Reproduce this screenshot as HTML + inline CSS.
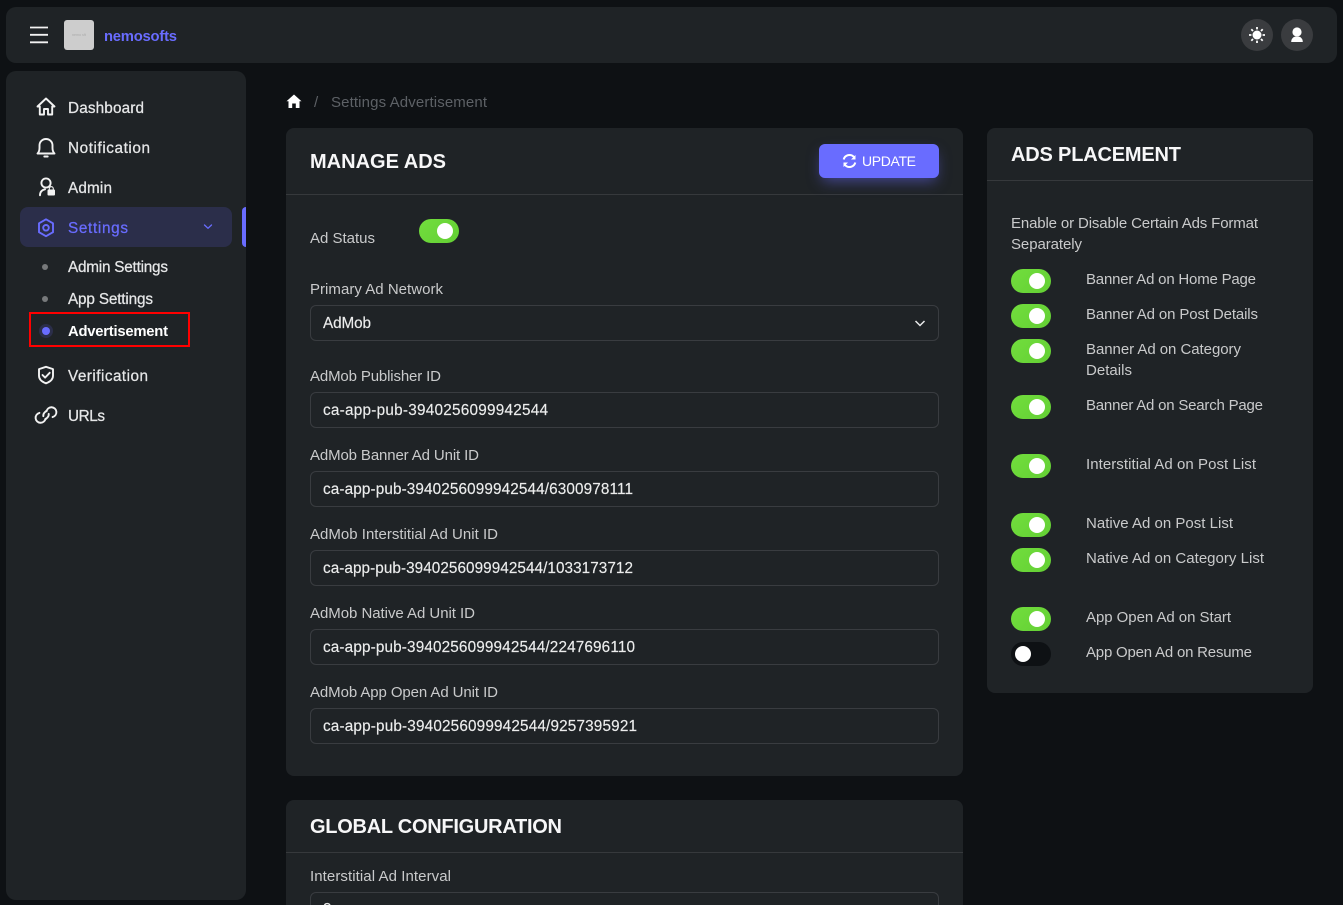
<!DOCTYPE html>
<html lang="en">
<head>
<meta charset="utf-8">
<title>Settings Advertisement</title>
<style>
*{box-sizing:border-box}
html,body{margin:0;padding:0;width:1343px;height:905px;overflow:hidden;background:#0e1114}
body{position:relative;font-family:"Liberation Sans",sans-serif}
.p{position:absolute;background:#1f2326;border-radius:10px}
.c{border-radius:8px}
.hr{position:absolute;height:1px;background:#36393c}
.inp{position:absolute;left:310px;width:629px;height:36px;border:1px solid #393c40;border-radius:6px}
.t{position:absolute;width:40px;height:24px;border-radius:12px;background:linear-gradient(135deg,#72de3d,#63cf34)}
.t:after{content:"";position:absolute;left:18px;top:4px;width:16px;height:16px;border-radius:50%;background:#fff}
.t.off{background:#0e1114}
.t.off:after{left:4px}
svg{position:absolute;overflow:visible}
svg.o{left:0;top:0;width:1343px;height:905px}
text{font-family:"Liberation Sans",sans-serif;font-size:15px;fill:#c9cacb}
.n{fill:#e6e7e8;font-size:15.3px;stroke:#e6e7e8;stroke-width:.25px}
.v{fill:#eceded;font-size:15.3px;stroke:#eceded;stroke-width:.15px}
.h{fill:#f7f7f8;font-size:20px;font-weight:700}
</style>
</head>
<body>
<div class="p" style="left:6px;top:7px;width:1331px;height:56px"></div>
<div class="p" style="left:6px;top:71px;width:240px;height:829px"></div>
<div style="position:absolute;left:20px;top:207px;width:212px;height:40px;border-radius:8px;background:#2b2e4a"></div>
<div style="position:absolute;left:242px;top:207px;width:4px;height:40px;border-radius:4px 0 0 4px;background:#696cff"></div>
<div style="position:absolute;left:64px;top:20px;width:30px;height:30px;border-radius:3px;background:#cdcdcd"></div>
<div style="position:absolute;left:29px;top:312px;width:161px;height:35px;border:2px solid #f00"></div>

<div class="p c" style="left:286px;top:128px;width:677px;height:648px"></div>
<div class="hr" style="left:286px;top:194px;width:677px"></div>
<div style="position:absolute;left:819px;top:144px;width:120px;height:34px;border-radius:6px;background:#696cff;box-shadow:0 6px 14px -3px rgba(105,108,255,.5)"></div>
<div class="p c" style="left:286px;top:800px;width:677px;height:140px"></div>
<div class="hr" style="left:286px;top:852px;width:677px"></div>
<div class="p c" style="left:987px;top:128px;width:326px;height:565px"></div>
<div class="hr" style="left:987px;top:180px;width:326px"></div>

<div class="inp" style="top:305px"></div>
<div class="inp" style="top:392px"></div>
<div class="inp" style="top:471px"></div>
<div class="inp" style="top:550px"></div>
<div class="inp" style="top:629px"></div>
<div class="inp" style="top:708px"></div>
<div class="inp" style="top:892px"></div>

<div class="t" style="left:419px;top:219px"></div>
<div class="t" style="left:1011px;top:269px"></div>
<div class="t" style="left:1011px;top:304px"></div>
<div class="t" style="left:1011px;top:339px"></div>
<div class="t" style="left:1011px;top:395px"></div>
<div class="t" style="left:1011px;top:454px"></div>
<div class="t" style="left:1011px;top:513px"></div>
<div class="t" style="left:1011px;top:548px"></div>
<div class="t" style="left:1011px;top:607px"></div>
<div class="t off" style="left:1011px;top:642px"></div>

<svg class="o" viewBox="0 0 1343 905" xmlns="http://www.w3.org/2000/svg">
  <!-- hamburger -->
  <path d="M30 27.500H48M30 34.800H48M30 42.300H48" stroke="#f2f2f2" stroke-width="1.800"/>
  <text x="72" y="36" style="font-size:3.500px;fill:#aaa" textLength="14">nemo sft</text>
  <text x="104" y="41" style="font-size:14.800px;font-weight:700;fill:#696cff" textLength="73">nemosofts</text>

  <!-- header actions -->
  <circle cx="1257" cy="35" r="16" fill="#3a3c3f"/>
  <circle cx="1297" cy="35" r="16" fill="#3a3c3f"/>
  <circle cx="1257" cy="35" r="4.500" fill="#fff"/>
  <path d="M1257 27v2.400M1257 40.600V43M1249 35h2.400M1262.600 35h2.400M1251.300 29.300l1.700 1.700M1261 39l1.700 1.700M1251.300 40.700L1253 39M1261 31l1.700-1.700" stroke="#fff" stroke-width="1.800"/>
  <circle cx="1297" cy="32" r="4.600" fill="#fff"/>
  <path d="M1291.200 42c0-2.800 1.500-4.700 3.500-5.300h4.600c2 .6 3.500 2.500 3.500 5.300z" fill="#fff"/>

  <!-- sidebar icons -->
  <g fill="none" stroke="#f2f2f2" stroke-width="1.900" stroke-linejoin="round" stroke-linecap="round">
    <path d="M37.500 106.500L46 98.500l8.500 8h-2.300v8H48v-5.500h-4v5.500h-4.200v-8z"/>
    <path d="M37.500 153.500H54.500c-1.500-1.500-2-3-2-5.500v-2.500c0-3.700-2.900-6.500-6.500-6.500s-6.500 2.800-6.500 6.500v2.500c0 2.500-.5 4-2 5.500z"/>
    <path d="M44.300 156.500h3.400"/>
    <circle cx="46" cy="183" r="4.600"/>
    <path d="M40 195.300c0-3.300 1.800-5.300 5-6"/>
    <path d="M46 219.300l7 4v8.900l-7 4-7-4v-8.900z" stroke="#696cff"/>
    <circle cx="46" cy="227.800" r="2.800" stroke="#696cff"/>
    <path d="M204.500 225l3.500 3.300 3.500-3.300" stroke="#696cff" stroke-width="1.300"/>
    <path d="M46 366.800l7 2.300v6.700c0 3.500-3 6.100-7 7.500-4-1.400-7-4-7-7.500v-6.700z"/>
    <path d="M42.500 375l2.600 2.600 4.600-4.800"/>
    <path d="M46.500 411.300a5 5 0 1 1 6.100 5.800"/>
    <path d="M45.500 418.700a5 5 0 1 1-6.100-5.800"/>
    <path d="M43.300 416.200a4.600 4.600 0 0 1 1-3.400l1.800-1.800M48.700 413.800a4.600 4.600 0 0 1-1 3.400l-1.800 1.800"/>
  </g>
  <rect x="47.500" y="189.500" width="7.500" height="6" rx="1" fill="#f2f2f2"/>
  <path d="M49.300 190v-1.300a2 2 0 0 1 4 0V190" fill="none" stroke="#f2f2f2" stroke-width="1.100"/>

  <!-- sub-menu bullets -->
  <circle cx="45" cy="267" r="3" fill="#77797b"/>
  <circle cx="45" cy="299" r="3" fill="#77797b"/>
  <circle cx="46" cy="331" r="7" fill="#2b2e4a"/>
  <circle cx="46" cy="331" r="4" fill="#696cff"/>

  <!-- sidebar text -->
  <text class="n" x="68" y="113" textLength="76">Dashboard</text>
  <text class="n" x="68" y="153" textLength="82">Notification</text>
  <text class="n" x="68" y="193" textLength="44">Admin</text>
  <text class="n" x="68" y="233" textLength="60" style="fill:#696cff;stroke:#696cff">Settings</text>
  <text class="n" x="68" y="272" textLength="100">Admin Settings</text>
  <text class="n" x="68" y="304" textLength="85">App Settings</text>
  <text class="n" x="68" y="336" textLength="100" style="fill:#fff;stroke:none;font-weight:700;font-size:14.800px">Advertisement</text>
  <text class="n" x="68" y="381" textLength="80">Verification</text>
  <text class="n" x="68" y="421" textLength="37">URLs</text>

  <!-- breadcrumb -->
  <path d="M294 94.500l7.500 6.700h-2V108h-3.700v-4.500h-3.600V108h-3.700v-6.800h-2z" fill="#fff"/>
  <text x="314" y="107" style="fill:#5d6166">/</text>
  <text x="331" y="107" textLength="156" style="fill:#5d6166">Settings Advertisement</text>

  <!-- titles -->
  <text class="h" x="310" y="168" textLength="136">MANAGE ADS</text>
  <text class="h" x="1011" y="161" textLength="170">ADS PLACEMENT</text>
  <text class="h" x="310" y="833" textLength="252">GLOBAL CONFIGURATION</text>

  <!-- update button -->
  <g fill="none" stroke="#fff" stroke-width="2">
    <path d="M843.700 159.500a6 6 0 0 1 10.300-2.500"/>
    <path d="M855.300 162.500a6 6 0 0 1-10.300 2.500"/>
  </g>
  <path d="M855.500 155v4.500H851zM843.500 167v-4.500h4.500z" fill="#fff"/>
  <text x="862" y="166" textLength="54" style="fill:#fff;font-size:14px">UPDATE</text>

  <!-- main form -->
  <text x="310" y="243" textLength="65">Ad Status</text>
  <text x="310" y="294" textLength="133">Primary Ad Network</text>
  <text class="v" x="323" y="328" textLength="48">AdMob</text>
  <path d="M915.500 321l4.500 4.500 4.500-4.500" fill="none" stroke="#e8e9ea" stroke-width="1.500"/>
  <text x="310" y="381" textLength="131">AdMob Publisher ID</text>
  <text class="v" x="323" y="415" textLength="225">ca-app-pub-3940256099942544</text>
  <text x="310" y="460" textLength="169">AdMob Banner Ad Unit ID</text>
  <text class="v" x="323" y="494" textLength="310">ca-app-pub-3940256099942544/6300978111</text>
  <text x="310" y="539" textLength="188">AdMob Interstitial Ad Unit ID</text>
  <text class="v" x="323" y="573" textLength="310">ca-app-pub-3940256099942544/1033173712</text>
  <text x="310" y="618" textLength="165">AdMob Native Ad Unit ID</text>
  <text class="v" x="323" y="652" textLength="312">ca-app-pub-3940256099942544/2247696110</text>
  <text x="310" y="697" textLength="188">AdMob App Open Ad Unit ID</text>
  <text class="v" x="323" y="731" textLength="314">ca-app-pub-3940256099942544/9257395921</text>
  <text x="310" y="881" textLength="141">Interstitial Ad Interval</text>
  <text class="v" x="323" y="914">3</text>

  <!-- placement -->
  <text x="1011" y="228" textLength="247">Enable or Disable Certain Ads Format</text>
  <text x="1011" y="249" textLength="71">Separately</text>
  <text x="1086" y="284" textLength="170">Banner Ad on Home Page</text>
  <text x="1086" y="319" textLength="172">Banner Ad on Post Details</text>
  <text x="1086" y="354" textLength="155">Banner Ad on Category</text>
  <text x="1086" y="375" textLength="46">Details</text>
  <text x="1086" y="410" textLength="177">Banner Ad on Search Page</text>
  <text x="1086" y="469" textLength="170">Interstitial Ad on Post List</text>
  <text x="1086" y="528" textLength="147">Native Ad on Post List</text>
  <text x="1086" y="563" textLength="178">Native Ad on Category List</text>
  <text x="1086" y="622" textLength="145">App Open Ad on Start</text>
  <text x="1086" y="657" textLength="166">App Open Ad on Resume</text>
</svg>
</body>
</html>
